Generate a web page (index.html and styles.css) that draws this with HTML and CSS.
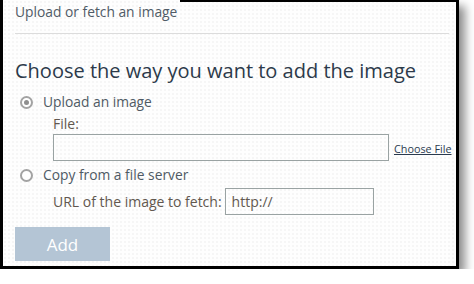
FILE: index.html
```html
<!DOCTYPE html>
<html lang="en">
<head>
  <meta charset="UTF-8">
  <title>Upload or fetch an image</title>
  <link rel="stylesheet" href="styles.css">
</head>
<body>

  <div class="frame">
    <div class="top-edge"></div>
    <div class="panel">
      <div class="title">Upload or fetch an image</div>
      <div class="rule"></div>
      <h2>Choose the way you want to add the image</h2>

      <div class="option">
        <span class="radio checked"></span>
        <span>Upload an image</span>
      </div>
      <div class="sub">
        <div class="label file-label">File:</div>
        <div class="file-row">
          <div class="field file-field"></div>
          <a class="choose" href="#">Choose File</a>
        </div>
      </div>

      <div class="option second">
        <span class="radio"></span>
        <span>Copy from a file server</span>
      </div>
      <div class="sub url-row">
        <span class="label">URL of the image to fetch:</span>
        <div class="field url-field">http://</div>
      </div>

      <button class="add">Add</button>
    </div>
  </div>

</body>
</html>
```

FILE: styles.css
```css
body {
  margin: 0;
  background: #fff;
  font-family: "Open Sans", "Liberation Sans", sans-serif;
}
.frame {
  width: 453px;
  height: 266px;
  overflow: hidden;
  border-left: 3px solid #000;
  border-right: 3px solid #000;
  border-bottom: 3px solid #000;
  background-color: #fefefe;
  background-image: radial-gradient(#f1f1f1 0.6px, transparent 0.9px);
  background-size: 4px 4px;
  box-shadow: 6px 6px 9px rgba(0, 0, 0, 0.45);
}
.top-edge {
  height: 2px;
  margin-left: 177px;
  background: #000;
}
.panel {
  padding: 0 7px 0 12px;
}
.title {
  font-size: 13.8px;
  line-height: 20px;
  color: #505b66;
}
.rule {
  height: 1px;
  margin-top: 11px;
  background: #dcdcdc;
}
h2 {
  margin: 23px 0 7px;
  font-size: 20px;
  font-weight: normal;
  line-height: 28px;
  color: #2c3a4a;
}
.option {
  display: flex;
  align-items: center;
  gap: 10px;
  padding-left: 5px;
  margin-top: 2px;
  font-size: 13.8px;
  line-height: 20px;
  color: #4f5a64;
}
.option.second {
  margin-top: 4px;
}
.radio {
  width: 9px;
  height: 9px;
  border: 2px solid #a3a3a3;
  border-radius: 50%;
  background: #fff;
  position: relative;
}
.radio.checked::after {
  content: "";
  position: absolute;
  left: 2px;
  top: 2px;
  width: 5px;
  height: 5px;
  border-radius: 50%;
  background: #8f8f8f;
}
.sub {
  padding-left: 38px;
  font-size: 14px;
  line-height: 20px;
}
.label {
  color: #62584f;
}
.file-label {
  padding-top: 3px;
  line-height: 18px;
}
.file-row {
  display: flex;
  align-items: center;
  gap: 5px;
  margin-top: 1px;
}
.field {
  box-sizing: border-box;
  height: 27px;
  border: 1px solid #9aa3a3;
  background: transparent;
}
.file-field {
  width: 336px;
  flex: none;
}
.choose {
  font-size: 10.8px;
  white-space: nowrap;
  color: #2a3a4e;
  margin-top: 3px;
}
.url-row {
  display: flex;
  align-items: center;
  gap: 3px;
  margin-top: 3px;
}
.url-field {
  width: 149px;
  padding-left: 6px;
  line-height: 25px;
  color: #62584f;
}
.add {
  display: block;
  width: 95px;
  height: 34px;
  margin-top: 12px;
  border: none;
  background: #b4c5d5;
  color: #fff;
  font-family: inherit;
  font-size: 17px;
}
```
